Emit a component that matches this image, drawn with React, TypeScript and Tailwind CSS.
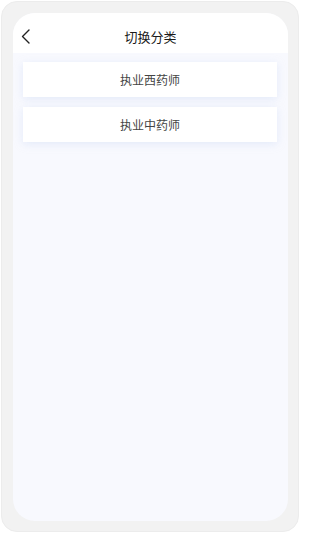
import React from "react";

export default function App() {
  const items = ["执业西药师", "执业中药师"];
  return (
    <div
      className="w-[300px] h-[533px] bg-white p-[1px]"
      style={{ fontFamily: '"Noto Sans CJK SC", "Noto Sans", sans-serif' }}
    >
      <div className="h-full w-full rounded-[16px] bg-[#f2f2f2] border border-[#ececec] pt-[11px] pl-[11px] pr-[10px] pb-[10px]">
        <div className="h-full w-full rounded-[22px] bg-[#f8f9fe] overflow-hidden flex flex-col">
          <div className="relative h-[40px] bg-white flex items-center justify-center shrink-0 pt-[6px]">
            <svg
              className="absolute left-[8px] top-[16px]"
              width="10"
              height="15"
              viewBox="0 0 10 15"
              fill="none"
            >
              <path d="M8 1 L1.5 7.5 L8 14" stroke="#222" strokeWidth="1.4" strokeLinecap="round" strokeLinejoin="round" />
            </svg>
            <span className="text-[13px] leading-none text-[#1a1a1a]">切换分类</span>
          </div>
          <div className="flex flex-col gap-[10px] pt-[9px] pl-[10px] pr-[11px]">
            {items.map((t) => (
              <div
                key={t}
                className="h-[35px] bg-white flex items-center justify-center shadow-[0_2px_8px_rgba(190,205,240,0.35)]"
              >
                <span className="text-[12px] leading-none text-[#444]">{t}</span>
              </div>
            ))}
          </div>
        </div>
      </div>
    </div>
  );
}
